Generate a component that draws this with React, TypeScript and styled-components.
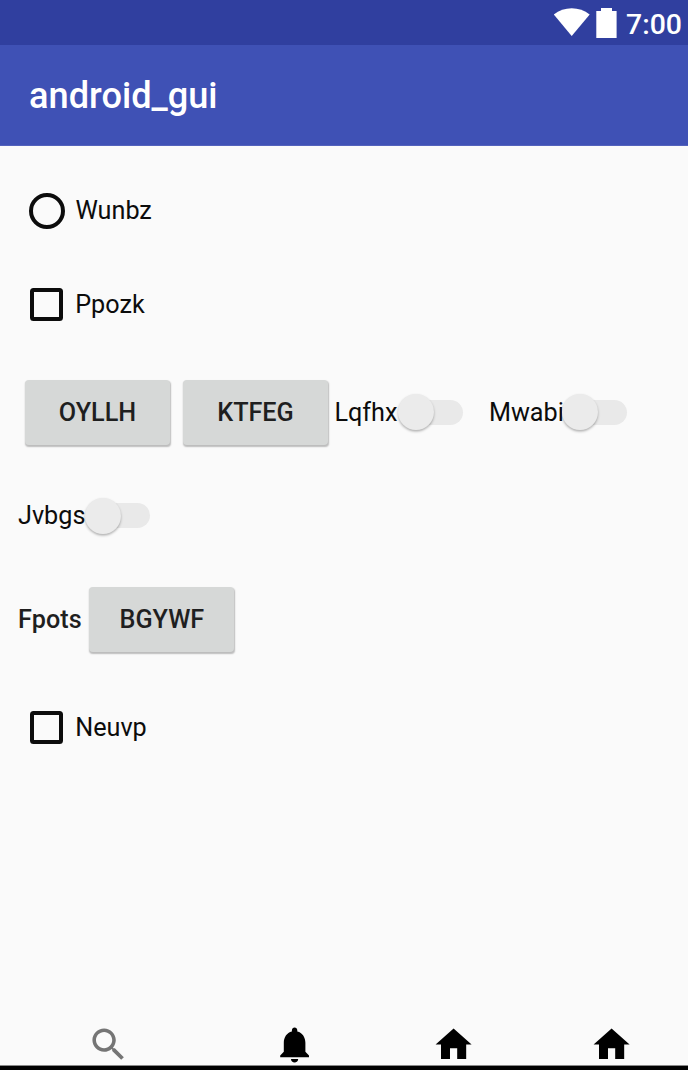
import React from "react";
import styled, { createGlobalStyle } from "styled-components";

const GlobalStyle = createGlobalStyle`
  *, *::before, *::after { box-sizing: border-box; }
  body { margin: 0; background: #fafafa; }
`;

const Screen = styled.div`
  display: flex;
  flex-direction: column;
  width: 688px;
  height: 1070px;
  overflow: hidden;
  background: #fafafa;
  color: #0c0c0c;
  font: 400 25.2px/30px Roboto, sans-serif;
`;

const StatusBar = styled.header`
  display: flex;
  justify-content: flex-end;
  align-items: flex-start;
  height: 45px;
  flex: none;
  padding: 8px 6px 0 0;
  background: #303f9f;
  color: #fff;
`;

const Clock = styled.span`
  margin-left: 8px;
  font-size: 28.4px;
  line-height: 34px;
  font-weight: 500;
`;

const AppBar = styled.div`
  display: flex;
  align-items: center;
  height: 101px;
  flex: none;
  padding: 2px 0 0 29px;
  background: #3f51b5;
  border-bottom: 1px solid #5362bc;
  color: #fff;
`;

const Title = styled.h1`
  margin: 0;
  font-size: 36.2px;
  line-height: 42px;
  font-weight: 500;
`;

const Content = styled.main`
  flex: 1;
  padding: 18px 18px 0;
`;

const Row = styled.div<{ $height: number }>`
  display: flex;
  align-items: center;
  height: ${(p) => p.$height}px;
`;

const Choice = styled.label`
  display: flex;
  align-items: center;
  padding-left: 11px;
`;

const ChoiceText = styled.span<{ $drop?: number }>`
  padding-top: ${(p) => p.$drop ?? 0}px;
  color: #0c0c0c;
`;

const RadioMark = styled.span`
  width: 36px;
  height: 36px;
  margin-right: 10.5px;
  border: 4px solid #0c0c0c;
  border-radius: 50%;
`;

const CheckMark = styled.span`
  width: 33px;
  height: 33px;
  margin: 0 12.2px 0 1px;
  border: 4px solid #0c0c0c;
  border-radius: 3.5px;
`;

const Button = styled.button`
  width: 145px;
  height: 65px;
  flex: none;
  margin: 0 6px 0 7px;
  padding: 0;
  border: 0;
  border-radius: 4px;
  background: #d6d8d7;
  box-shadow: 0.5px 1.5px 1.5px rgba(0, 0, 0, 0.25);
  color: #1f1f1f;
  font: 500 25.2px/30px Roboto, sans-serif;
`;

const Toggle = styled.label<{ $width: number }>`
  display: flex;
  align-items: center;
  justify-content: space-between;
  width: ${(p) => p.$width}px;
`;

const Track = styled.span`
  display: flex;
  align-items: center;
  width: 61px;
  height: 25px;
  margin-bottom: 1px;
  border-radius: 13px;
  background: #e9e9e9;
`;

const Thumb = styled.span`
  width: 36px;
  height: 36px;
  flex: none;
  margin-left: -4px;
  border-radius: 50%;
  background: #ebebeb;
  box-shadow: 0 1.5px 2.5px rgba(0, 0, 0, 0.3);
`;

const Label = styled.span`
  width: 64.4px;
  color: #1f1f1f;
  font-weight: 500;
`;

const BottomNav = styled.nav`
  display: flex;
  align-items: flex-start;
  height: 48px;
  flex: none;
  padding-left: 87px;
  border-bottom: 4px solid #000;
  box-shadow: inset 0 -1px 0 #888;
`;

const NavIcon = styled.svg<{ $gap: number }>`
  width: 43.2px;
  height: 43.2px;
  flex: none;
  margin: 0.6px ${(p) => p.$gap}px 0 0;
`;

const HOME = "M10 20v-6h4v6h5v-8h3L12 3 2 12h3v8z";
const BELL =
  "M12 22c1.1 0 2-.9 2-2h-4c0 1.1.89 2 2 2zm6-6v-5c0-3.07-1.64-5.64-4.5-6.32V4c0-.83-.67-1.5-1.5-1.5s-1.5.67-1.5 1.5v.68C7.63 5.36 6 7.92 6 11v5l-2 2v1h16v-1l-2-2z";
const SEARCH =
  "M15.5 14h-.79l-.28-.27C15.41 12.59 16 11.11 16 9.5 16 5.91 13.09 3 9.5 3S3 5.91 3 9.5 5.91 16 9.5 16c1.61 0 3.09-.59 4.23-1.57l.27.28v.79l5 4.99L20.49 19l-4.99-5zm-6 0C7.01 14 5 11.99 5 9.5S7.01 5 9.5 5 14 7.01 14 9.5 11.99 14 9.5 14z";

function Icon({ path, gap = 0, color = "#000" }: { path: string; gap?: number; color?: string }) {
  return (
    <NavIcon $gap={gap} viewBox="0 0 24 24" fill={color} aria-hidden>
      <path d={path} />
    </NavIcon>
  );
}

function Switch({ text, width }: { text: string; width: number }) {
  return (
    <Toggle $width={width}>
      <ChoiceText>{text}</ChoiceText>
      <Track>
        <Thumb />
      </Track>
    </Toggle>
  );
}

function Checkbox({ text }: { text: string }) {
  return (
    <Choice>
      <CheckMark />
      <ChoiceText $drop={1}>{text}</ChoiceText>
    </Choice>
  );
}

const ToggleGroup = styled.div`
  display: flex;
  gap: 25.5px;
  padding-left: 0.4px;
`;

export default function App() {
  return (
    <Screen>
      <GlobalStyle />
      <StatusBar>
        <svg width="65" height="32" viewBox="0 0 65 32" fill="#fff" aria-hidden>
          <path d="M0.8 6.5C11 -2 26.5 -2 36.7 6.5L18.7 28z" />
          <path d="M48 0h11v3h4.600v27H43.300V3H48z" />
        </svg>
        <Clock>7:00</Clock>
      </StatusBar>
      <AppBar>
        <Title>android_gui</Title>
      </AppBar>
      <Content>
        <Row $height={94}>
          <Choice>
            <RadioMark />
            <ChoiceText>Wunbz</ChoiceText>
          </Choice>
        </Row>
        <Row $height={92}>
          <Checkbox text="Ppozk" />
        </Row>
        <Row $height={125}>
          <Button>OYLLH</Button>
          <Button>KTFEG</Button>
          <ToggleGroup>
            <Switch text="Lqfhx" width={129} />
            <Switch text="Mwabi" width={138} />
          </ToggleGroup>
        </Row>
        <Row $height={82}>
          <Switch text="Jvbgs" width={132} />
        </Row>
        <Row $height={125}>
          <Label>Fpots</Label>
          <Button>BGYWF</Button>
        </Row>
        <Row $height={90}>
          <Checkbox text="Neuvp" />
        </Row>
      </Content>
      <BottomNav>
        <Icon path={SEARCH} gap={143.2} color="#757575" />
        <Icon path={BELL} gap={115.2} />
        <Icon path={HOME} gap={115.2} />
        <Icon path={HOME} />
      </BottomNav>
    </Screen>
  );
}
